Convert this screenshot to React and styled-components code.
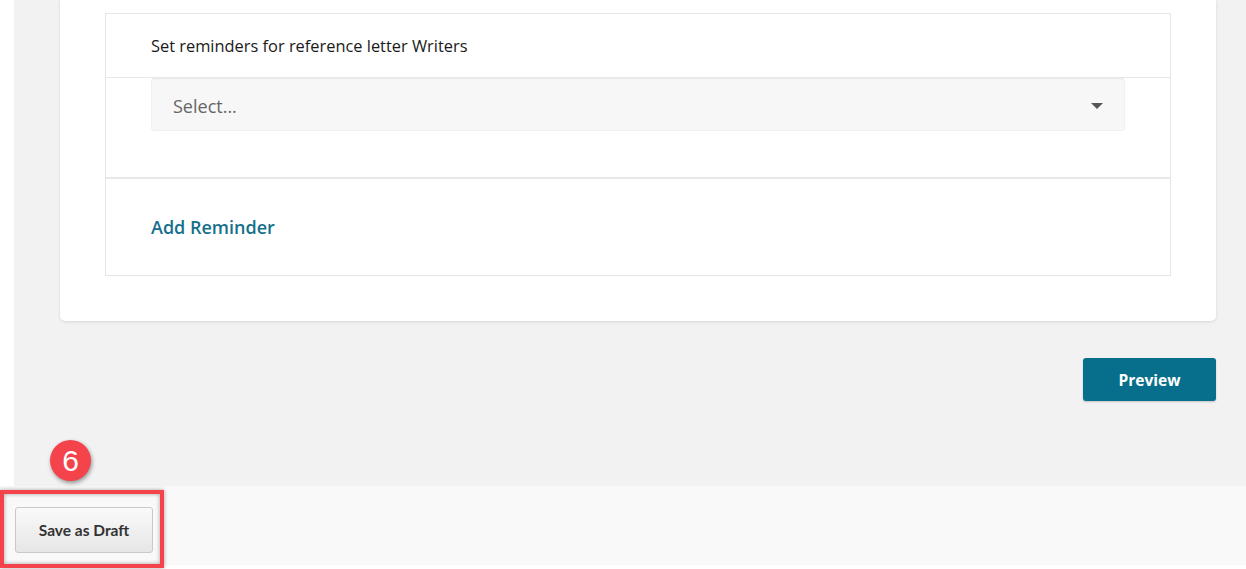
import React from 'react';
import styled, { createGlobalStyle } from 'styled-components';

const GlobalStyle = createGlobalStyle`
  html, body {
    margin: 0;
    padding: 0;
    background: #fff;
    font-family: "Open Sans", "Liberation Sans", sans-serif;
  }
`;

const Page = styled.div`
  position: relative;
  width: 1246px;
  height: 569px;
  overflow: hidden;
  background: #fff;
`;

const Main = styled.div`
  margin-left: 14px;
  height: 486px;
  background: #f2f2f2;
  padding: 0 30px 0 46px;
  box-sizing: border-box;
  display: flex;
  flex-direction: column;
  align-items: stretch;
`;

const Card = styled.div`
  background: #fff;
  border-radius: 0 0 5px 5px;
  box-shadow: 0 1px 3px rgba(0, 0, 0, 0.12);
  padding: 13px 45px 45px;
`;

const Box = styled.div`
  border: 1px solid #e6e6e6;
`;

const BoxHeader = styled.div`
  height: 63px;
  display: flex;
  align-items: center;
  padding-left: 45px;
  border-bottom: 1px solid #e8e8e8;
  font-size: 16.4px;
  color: #1a1a1a;
`;

const SelectArea = styled.div`
  padding: 0 45px 46px;
  border-bottom: 2px solid #e8e8e8;
`;

const SelectBox = styled.div`
  height: 53px;
  background: #f7f7f7;
  border-radius: 4px;
  box-shadow: inset 0 2px 1px -1px #e9e9e9, inset 0 0 0 1px #f0f0f0;
  display: flex;
  align-items: center;
  justify-content: space-between;
  padding: 2px 22px 0 22px;
  box-sizing: border-box;
  font-size: 18px;
  color: #666;
`;

const Caret = styled.span`
  width: 0;
  height: 0;
  border-left: 6px solid transparent;
  border-right: 6px solid transparent;
  border-top: 6px solid #555;
`;

const AddRow = styled.div`
  height: 96px;
  display: flex;
  align-items: center;
  padding-left: 45px;
`;

const AddLink = styled.a`
  font-size: 18px;
  font-weight: 600;
  color: #16708b;
  text-decoration: none;
`;

const Actions = styled.div`
  display: flex;
  justify-content: flex-end;
  margin-top: 37px;
`;

const PrimaryButton = styled.button`
  width: 133px;
  height: 43px;
  background: #076f8b;
  border: none;
  border-radius: 3px;
  box-shadow: 0 1px 2px rgba(0, 0, 0, 0.2);
  color: #fff;
  font-family: "Open Sans", "Liberation Sans", sans-serif;
  font-size: 15.5px;
  font-weight: 700;
`;

const Footer = styled.div`
  height: 79px;
  background: #f9f9f9;
  padding: 21px 0 0 15px;
  box-sizing: border-box;
`;

const DraftButton = styled.button`
  width: 138px;
  height: 46px;
  border: 1px solid #c9c9c9;
  border-radius: 3px;
  background: linear-gradient(#fafafa, #e6e6e6);
  color: #333;
  font-family: "Lato", "Open Sans", sans-serif;
  font-size: 15.5px;
  font-weight: 700;
`;

const Highlight = styled.div`
  position: absolute;
  left: 0;
  top: 490px;
  width: 164px;
  height: 78px;
  box-sizing: border-box;
  border: 4px solid #f4434a;
  box-shadow: 0 0 4px rgba(0, 0, 0, 0.35), inset 0 0 4px rgba(0, 0, 0, 0.35);
  pointer-events: none;
`;

const Badge = styled.div`
  position: absolute;
  left: 50px;
  top: 440px;
  width: 41px;
  height: 41px;
  border-radius: 50%;
  background: #f4434a;
  box-shadow: 1px 2px 4px rgba(0, 0, 0, 0.4);
  color: #fff;
  font-family: "Liberation Sans", Arial, sans-serif;
  font-size: 30px;
  display: flex;
  align-items: center;
  justify-content: center;
`;

export default function App() {
  return (
    <Page>
      <GlobalStyle />
      <Main>
        <Card>
          <Box>
            <BoxHeader>Set reminders for reference letter Writers</BoxHeader>
            <SelectArea>
              <SelectBox>
                <span>Select...</span>
                <Caret />
              </SelectBox>
            </SelectArea>
            <AddRow>
              <AddLink href="#">Add Reminder</AddLink>
            </AddRow>
          </Box>
        </Card>
        <Actions>
          <PrimaryButton>Preview</PrimaryButton>
        </Actions>
      </Main>
      <Footer>
        <DraftButton>Save as Draft</DraftButton>
      </Footer>
      <Badge>6</Badge>
      <Highlight />
    </Page>
  );
}
